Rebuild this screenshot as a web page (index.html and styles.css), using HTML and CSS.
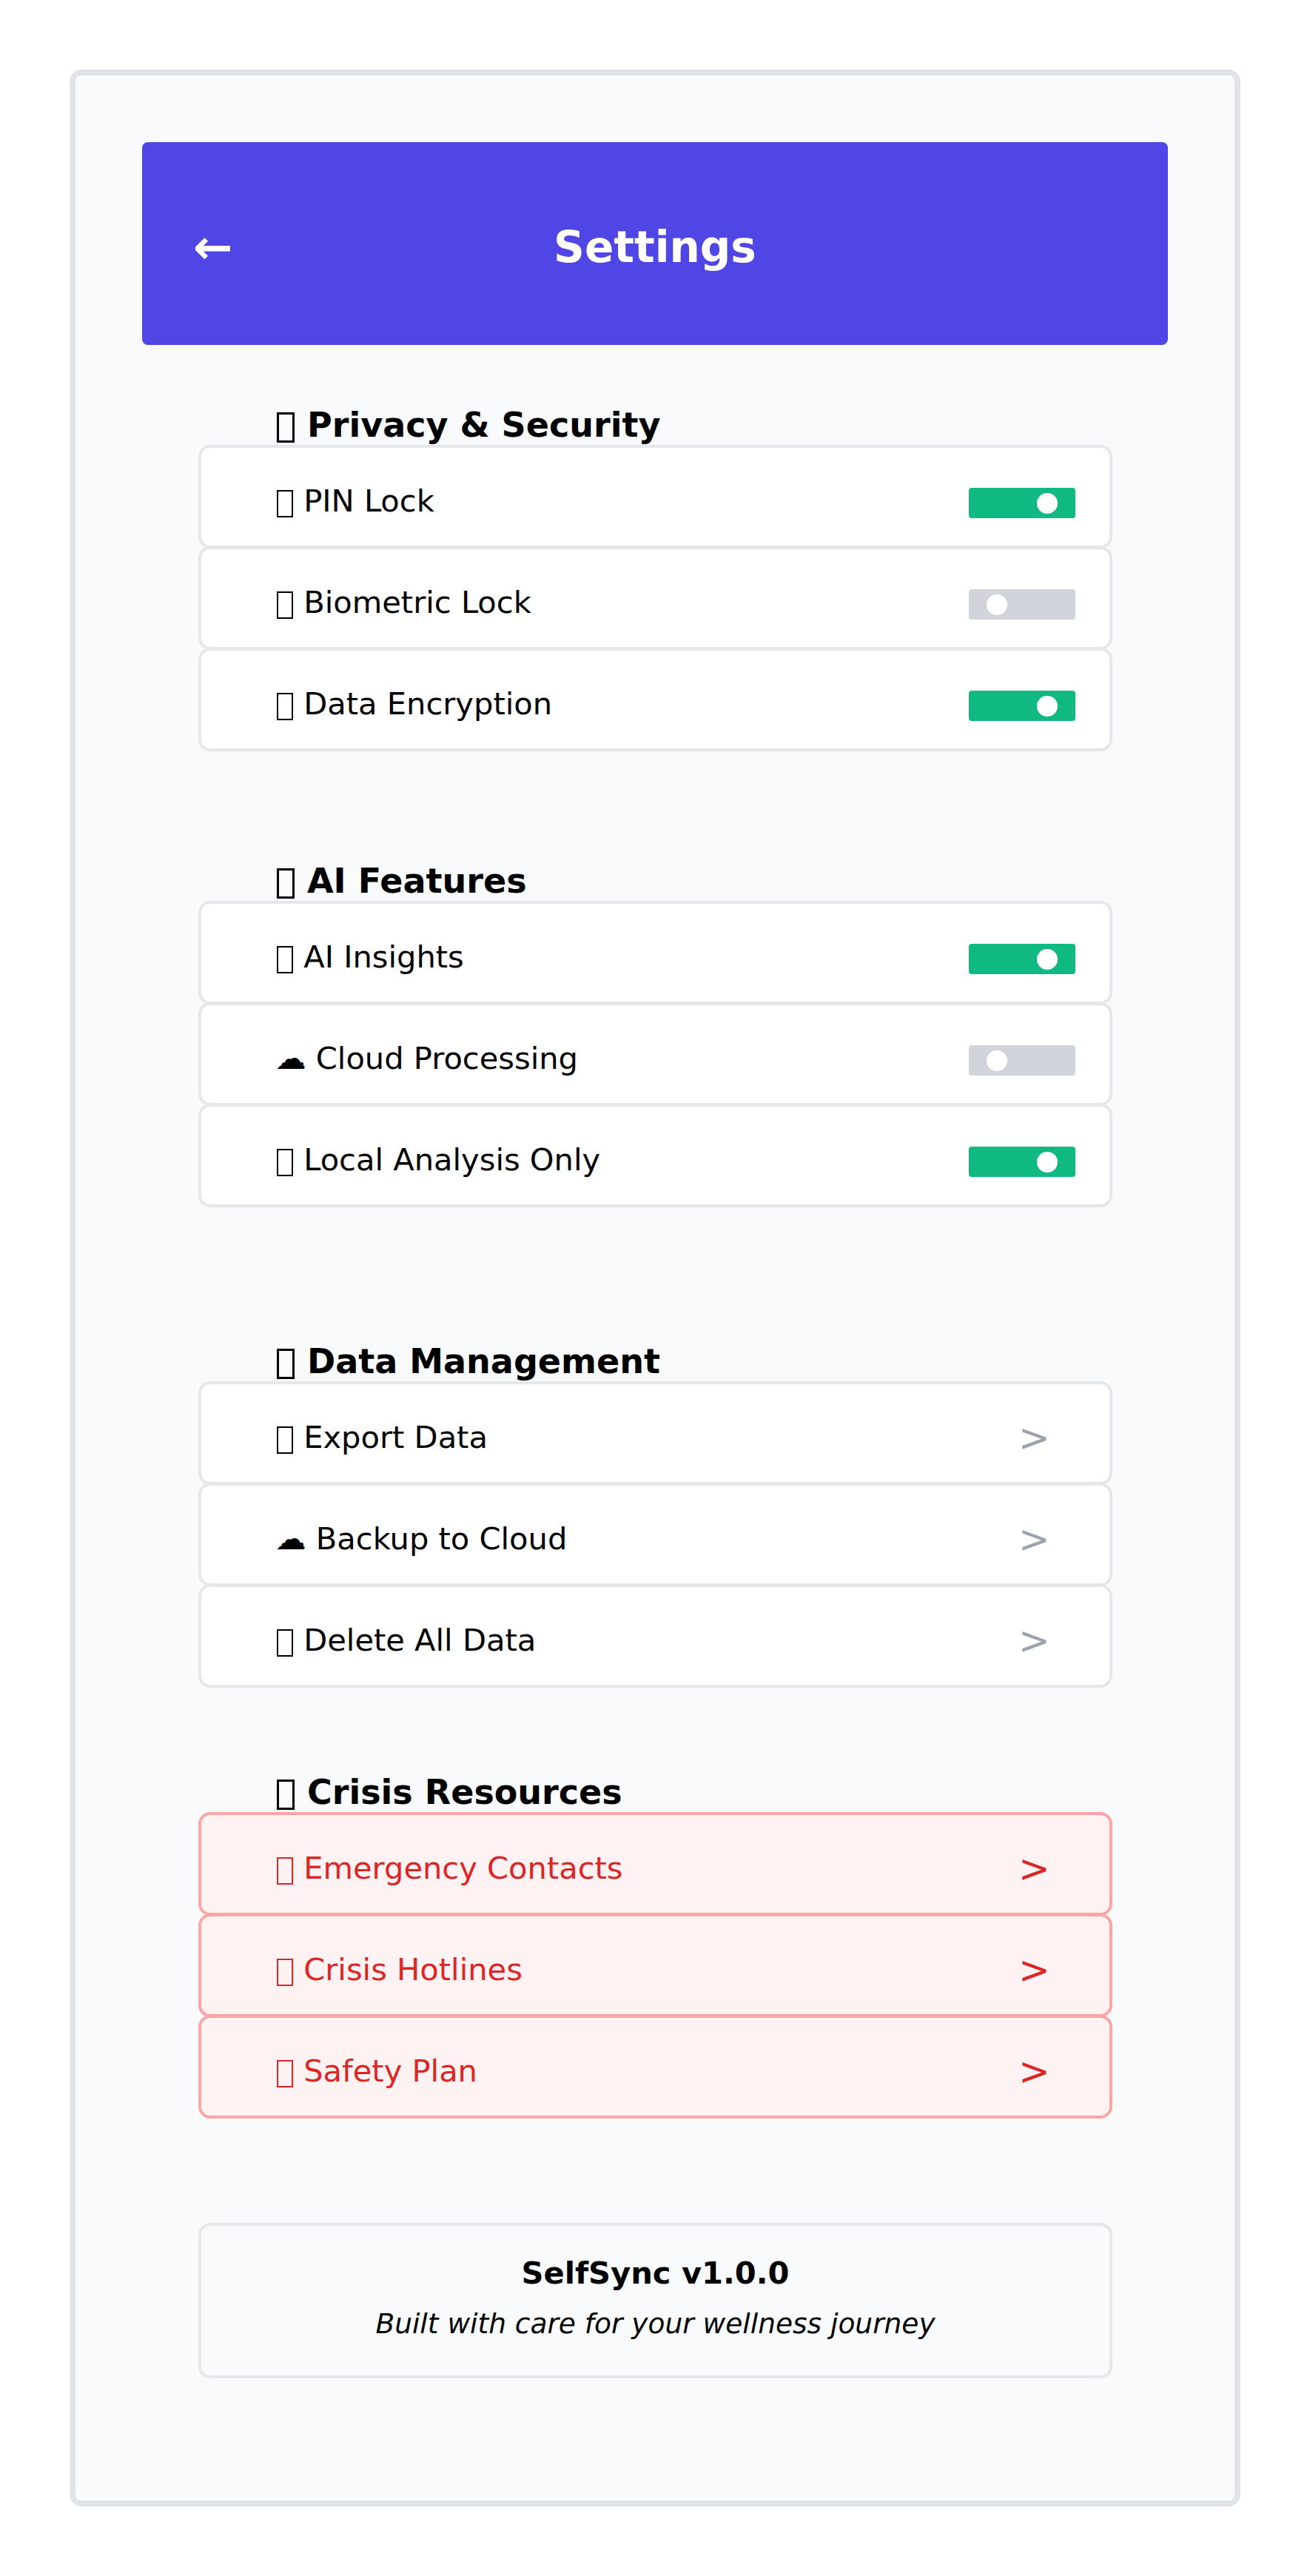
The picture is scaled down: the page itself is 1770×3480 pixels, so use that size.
FILE: index.html
```html
<!DOCTYPE html>
<html lang="en">
<head>
<meta charset="utf-8">
<title>Settings</title>
<link rel="stylesheet" href="styles.css">
</head>
<body>
<main class="screen">
  <header class="topbar">
    <span class="back">←</span>
    <h1 class="title">Settings</h1>
    <span></span>
  </header>

  <section class="section section-privacy">
    <h2 class="section-title"><span class="tofu"></span> Privacy &amp; Security</h2>
    <div class="row"><span class="label"><span class="tofu"></span> PIN Lock</span><span class="toggle on"></span></div>
    <div class="row"><span class="label"><span class="tofu"></span> Biometric Lock</span><span class="toggle"></span></div>
    <div class="row"><span class="label"><span class="tofu"></span> Data Encryption</span><span class="toggle on"></span></div>
  </section>

  <section class="section section-ai">
    <h2 class="section-title"><span class="tofu"></span> AI Features</h2>
    <div class="row"><span class="label"><span class="tofu"></span> AI Insights</span><span class="toggle on"></span></div>
    <div class="row"><span class="label">☁ Cloud Processing</span><span class="toggle"></span></div>
    <div class="row"><span class="label"><span class="tofu"></span> Local Analysis Only</span><span class="toggle on"></span></div>
  </section>

  <section class="section section-data">
    <h2 class="section-title"><span class="tofu"></span> Data Management</h2>
    <div class="row"><span class="label"><span class="tofu"></span> Export Data</span><span class="chevron">&gt;</span></div>
    <div class="row"><span class="label">☁ Backup to Cloud</span><span class="chevron">&gt;</span></div>
    <div class="row"><span class="label"><span class="tofu"></span> Delete All Data</span><span class="chevron">&gt;</span></div>
  </section>

  <section class="section section-crisis">
    <h2 class="section-title"><span class="tofu"></span> Crisis Resources</h2>
    <div class="row crisis"><span class="label"><span class="tofu"></span> Emergency Contacts</span><span class="chevron">&gt;</span></div>
    <div class="row crisis"><span class="label"><span class="tofu"></span> Crisis Hotlines</span><span class="chevron">&gt;</span></div>
    <div class="row crisis"><span class="label"><span class="tofu"></span> Safety Plan</span><span class="chevron">&gt;</span></div>
  </section>

  <footer class="about">
    <div class="version">SelfSync v1.0.0</div>
    <div class="tagline">Built with care for your wellness journey</div>
  </footer>
</main>
</body>
</html>
```

FILE: styles.css
```css
* {
  box-sizing: border-box;
}

html,
body {
  margin: 0;
  background: #ffffff;
}

body {
  padding: 94px 94px 94px;
  font-family: "DejaVu Sans", sans-serif;
  color: #000000;
}

.screen {
  width: 1582px;
  height: 3292px;
  padding: 90px;
  background: #f9fafb;
  border: 8px solid #e0e4e8;
  border-radius: 16px;
}

.topbar {
  display: grid;
  grid-template-columns: 1fr auto 1fr;
  align-items: center;
  height: 274px;
  padding: 10px 69px 0;
  background: #4f46e5;
  border-radius: 8px;
  color: #ffffff;
}

.back {
  font-size: 64px;
  font-weight: 700;
  line-height: 1;
}

.title {
  margin: 0;
  font-size: 58px;
  font-weight: 700;
}

.section {
  margin: 0 75px 0 76px;
}

.section-privacy {
  margin-top: 81px;
}

.section-ai {
  margin-top: 148px;
}

.section-data {
  margin-top: 181px;
}

.section-crisis {
  margin-top: 114px;
}

.section-title {
  margin: 0;
  padding-left: 104px;
  font-size: 46px;
  font-weight: 700;
}

.tofu {
  display: inline-block;
  width: 22px;
  height: 37px;
  margin: 0 1px 0 2px;
  vertical-align: -8px;
  border: 2px solid currentColor;
}

.section-title .tofu {
  width: 24px;
  height: 41px;
  margin-right: 1px;
  border-width: 3px;
}

.row {
  display: flex;
  justify-content: space-between;
  align-items: flex-start;
  height: 140px;
  margin-top: -3px;
  padding: 47px 46px 0 100px;
  background: #ffffff;
  border: 4px solid #e5e7eb;
  border-radius: 16px;
}

.section-title + .row {
  margin-top: 0;
}

.label {
  font-size: 41.6px;
}

.toggle {
  position: relative;
  width: 144px;
  height: 41px;
  margin-top: 7px;
  background: #d1d5db;
  border-radius: 4px;
}

.toggle::after {
  content: "";
  position: absolute;
  top: 6.5px;
  left: 23.5px;
  width: 28px;
  height: 28px;
  background: #ffffff;
  border-radius: 50%;
}

.toggle.on {
  background: #10b981;
}

.toggle.on::after {
  left: 92px;
}

.chevron {
  margin-top: -5px;
  margin-right: 34px;
  font-size: 51.2px;
  color: #9ca3af;
}

.row.crisis {
  background: #fef2f2;
  border-color: #fca5a5;
  color: #dc2626;
}

.crisis .chevron {
  color: #dc2626;
}

.about {
  height: 210px;
  margin: 141px 75px 0 76px;
  padding-top: 39px;
  background: #f9fafb;
  border: 4px solid #e5e7eb;
  border-radius: 16px;
  text-align: center;
}

.version {
  font-size: 41.6px;
  font-weight: 700;
}

.tagline {
  margin-top: 22px;
  font-size: 37.5px;
  font-style: italic;
}
```
